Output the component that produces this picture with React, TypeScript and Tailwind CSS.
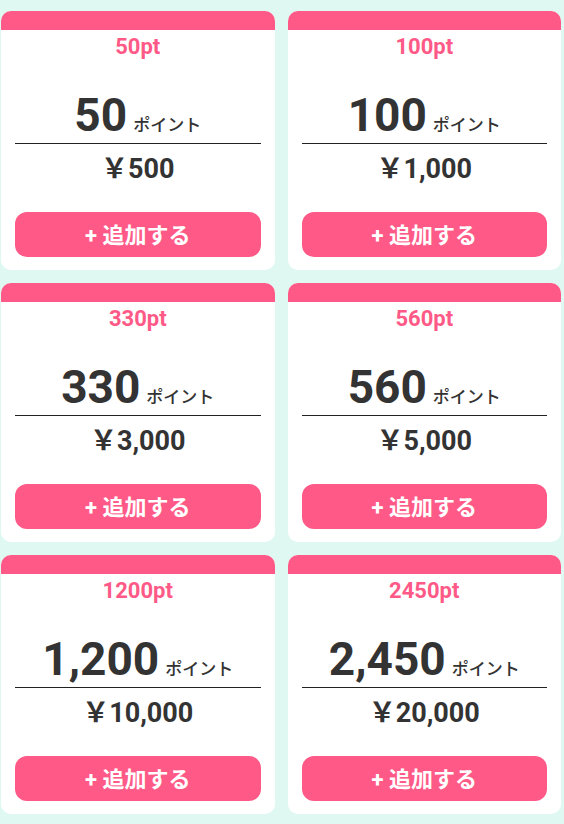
const PLANS = [
  { pt: "50", points: "50", price: "500" },
  { pt: "100", points: "100", price: "1,000" },
  { pt: "330", points: "330", price: "3,000" },
  { pt: "560", points: "560", price: "5,000" },
  { pt: "1200", points: "1,200", price: "10,000" },
  { pt: "2450", points: "2,450", price: "20,000" },
];

const FONT = "font-['Roboto','Noto_Sans_CJK_JP',sans-serif]";

const PlanCard = ({ pt, points, price }: { pt: string; points: string; price: string }) => (
  <div className="flex h-[259px] flex-col overflow-hidden rounded-[10px] bg-white">
    <div className="h-[19px] bg-[#ff5a87]" />
    <div className="flex flex-1 flex-col px-[14px] pb-[13px]">
      <p className="pt-[5px] text-center text-[22px] leading-[24px] font-bold text-[#ff5a87]">{pt}pt</p>
      <div className="mt-[33px] flex items-baseline justify-center gap-[6px] text-[#333]">
        <span className="text-[46px] leading-none font-bold">{points}</span>
        <span className="text-[17px] leading-none font-medium">ポイント</span>
      </div>
      <div className="mt-[5px] h-px bg-[#222]" />
      <p className="mt-[9px] text-center text-[27px] leading-[32px] font-bold text-[#333]">
        <span>￥</span>
        {price}
      </p>
      <button className="mt-auto flex h-[45px] items-center justify-center rounded-[12px] bg-[#ff5a87] pt-[2px] text-[22px] font-bold text-white">
        + 追加する
      </button>
    </div>
  </div>
);

export default function App() {
  return (
    <div className={`min-h-screen bg-[#e0f8f2] pt-[11px] pr-[3px] pb-[10px] pl-[1px] ${FONT}`}>
      <div className="grid grid-cols-2 gap-[13px]">
        {PLANS.map((p) => (
          <PlanCard key={p.pt} {...p} />
        ))}
      </div>
    </div>
  );
}
